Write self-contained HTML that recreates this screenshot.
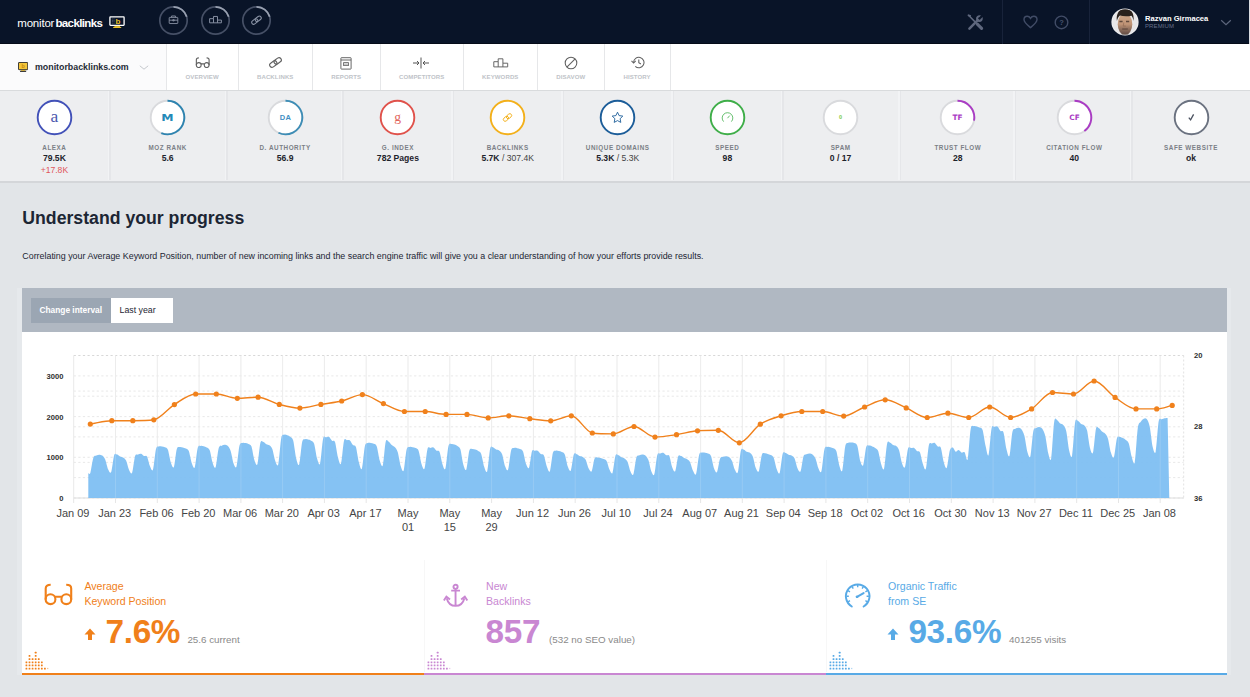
<!DOCTYPE html>
<html lang="en"><head><meta charset="utf-8"><title>Monitor Backlinks</title>
<style>
*{box-sizing:border-box;margin:0;padding:0}
html,body{width:1250px;height:697px;overflow:hidden}
body{font-family:"Liberation Sans",Arial,Helvetica,sans-serif;background:#e2e5e8;position:relative;color:#1f2937}
.abs{position:absolute}
#top{position:absolute;left:0;top:0;width:1250px;height:43.6px;background:#091428;border-bottom:1px solid #050b18}
#nav{position:absolute;left:0;top:43.6px;width:1250px;height:47.6px;background:#fff;border-bottom:1.4px solid #d9dbdd;z-index:2}
#nav .dom{position:absolute;left:0;top:0;width:166px;height:46.2px;background:#fbfbfc}
.vd{position:absolute;top:0;width:1px;height:46.2px;background:#e6e7e9}
.ni{position:absolute;top:0.9px;height:45px;text-align:center}
.ni svg{position:absolute;left:50%;}
.ni span{position:absolute;left:-5px;right:-5px;top:29.1px;font-size:6.05px;font-weight:bold;color:#c0c3c8;letter-spacing:.1px;text-transform:uppercase}
#met{position:absolute;left:0;top:90px;width:1250px;height:93.2px;background:#edeef0;border-bottom:2.800px solid #d4d6d9}
.md{position:absolute;top:0;width:3px;height:90.3px;margin-left:-2.5px;background:linear-gradient(90deg,#f2f3f5 0,#f2f3f5 1.5px,#e5e6e9 1.5px,#e5e6e9 3px)}
.mc{position:absolute;top:0;height:89px;text-align:center}
.mc .ring{position:absolute;left:50%;top:9.1px;margin-left:-18.5px;width:37px;height:37px}
.mc .lb{position:absolute;left:-10px;right:-10px;top:53.5px;font-size:6.3px;font-weight:bold;color:#7b7f86;letter-spacing:.55px;white-space:nowrap}
.mc .vl{position:absolute;left:-10px;right:-10px;top:62.6px;font-size:8.6px;font-weight:bold;color:#1d232c;white-space:nowrap}
.mc .vl i{font-style:normal;font-weight:normal;color:#444}
.mc .sub{position:absolute;left:-10px;right:-10px;top:75px;font-size:8.6px;color:#e0565b;white-space:nowrap}
h1{position:absolute;left:22.3px;top:207.6px;font-size:17.68px;line-height:20px;font-weight:bold;color:#1c2634;white-space:nowrap}
p.desc{position:absolute;left:22.3px;top:251px;font-size:8.88px;line-height:11px;color:#1c2634;white-space:nowrap}
#ph{position:absolute;left:22.2px;top:288.4px;width:1204.7px;height:43.3px;background:#b0b8c2}
#pb{position:absolute;left:22.2px;top:331.6px;width:1204.7px;height:343.4px;background:#fff}
.btn1{position:absolute;left:31px;top:297.5px;width:79.5px;height:25px;background:#9ba6b3;color:#fff;font-size:8.35px;font-weight:bold;line-height:25px;text-align:center;white-space:nowrap}
.btn2{position:absolute;left:110.5px;top:297.5px;width:62px;height:25px;background:#fff;color:#1c2634;font-size:8.8px;line-height:25px;padding-left:9px;white-space:nowrap}
svg.chart{position:absolute;left:0;top:0}
svg.chart .yl{font-family:"Liberation Sans",sans-serif;font-size:7.6px;font-weight:bold;fill:#2e2e2e}
svg.chart .xl{font-family:"Liberation Sans",sans-serif;font-size:11px;fill:#454545}
.st{position:absolute;top:560px;height:115px;border-bottom:2.5px solid #000}
.st .ttl{position:absolute;left:62px;top:19.4px;font-size:10.6px;line-height:14.3px;white-space:nowrap}
.st .big{position:absolute;top:54px;font-size:33.3px;line-height:36px;font-weight:bold;white-space:nowrap;letter-spacing:-.3px}
.st .sm{position:absolute;top:74.3px;font-size:9.8px;line-height:12px;color:#8a8a8a;white-space:nowrap}
.st svg{position:absolute}
.usr{position:absolute;left:1145px;top:13.8px;color:#fff;font-size:7.6px;font-weight:bold;white-space:nowrap;line-height:9px}
.prem{position:absolute;left:1145px;top:23.1px;color:#66708a;font-size:6px;white-space:nowrap;line-height:7px;letter-spacing:.1px}
.logo{position:absolute;left:17.3px;top:16.3px;color:#fff;font-size:11.5px;line-height:14px;white-space:nowrap;letter-spacing:-.2px}
.logo b{letter-spacing:-.62px;margin-left:1.2px}
.domt{position:absolute;left:35px;top:18.6px;font-size:8.84px;font-weight:bold;color:#252b36;line-height:11px;white-space:nowrap}
</style></head>
<body>
<div id="top"><div class="logo"><span>monitor</span><b>backlinks</b></div><svg class="abs" style="left:108.500px;top:15.500px" width="16" height="12.500" viewBox="0 0 16 12.500">
<rect x="0.900" y="0.900" width="14.200" height="8.400" rx="0.500" fill="none" stroke="#fff" stroke-width="1.300"/>
<rect x="5.400" y="9.900" width="5.600" height="1" fill="#e9c12c"/><rect x="4.200" y="10.900" width="8" height="1.100" fill="#e9c12c"/>
<path d="M3.400 2.600v5M5 2.600v5" stroke="#7f8899" stroke-width="0.700" stroke-dasharray="0.700,0.700"/>
<text x="9" y="8.300" text-anchor="middle" font-family="Liberation Sans,sans-serif" font-weight="bold" font-size="8" fill="#e9c12c">b</text>
</svg><svg class="abs" style="left:158.2px;top:5.200px" width="31" height="31" viewBox="0 0 31 31"><circle cx="15.5" cy="15.5" r="13.700" fill="none" stroke="#465066" stroke-width="1.700"/><path d="M15.5 1.800A13.700 13.700 0 0 1 28.700 11.800" fill="none" stroke="#99a1b1" stroke-width="1.700"/><g fill="none" stroke="#8b94a6" stroke-width="1" transform="translate(15.500 15.200) scale(0.880) translate(-15.500 -15.800)"><rect x="10.6" y="12.6" width="9.8" height="7" rx="0.6"/><path d="M13.3 12.6v-1.6h4.4v1.6M10.6 15.8h9.8M14.7 15.2h1.6v1.4h-1.6z"/></g></svg><svg class="abs" style="left:199.8px;top:5.200px" width="31" height="31" viewBox="0 0 31 31"><circle cx="15.5" cy="15.5" r="13.700" fill="none" stroke="#465066" stroke-width="1.700"/><path d="M15.5 1.800A13.700 13.700 0 0 1 28.700 11.800" fill="none" stroke="#99a1b1" stroke-width="1.700"/><g fill="none" stroke="#8b94a6" stroke-width="1" transform="translate(15.500 14.600) scale(0.950) translate(-15.500 -15)"><path d="M9.3 18.4v-4.4h4.1v-2.3h4.2v3.8h4.1v2.9zM13.4 14v4.4M17.6 15.5v2.9"/></g></svg><svg class="abs" style="left:241.4px;top:5.200px" width="31" height="31" viewBox="0 0 31 31"><circle cx="15.5" cy="15.5" r="13.700" fill="none" stroke="#465066" stroke-width="1.700"/><path d="M15.5 1.800A13.700 13.700 0 0 1 28.700 11.800" fill="none" stroke="#99a1b1" stroke-width="1.700"/><g fill="none" stroke="#8b94a6" stroke-width="1.050" transform="translate(0 -0.300) rotate(-38 15.5 15.5)"><rect x="10" y="13.600" width="6.600" height="3.800" rx="1.900"/><rect x="14.400" y="13.600" width="6.600" height="3.800" rx="1.900"/></g></svg><svg class="abs" style="left:967.300px;top:14.200px" width="17" height="17" viewBox="0 0 17 17">
<g stroke="#5f687e" fill="none" stroke-linecap="round">
<path d="M2.400 14.600L10.800 6.200" stroke-width="2.500"/>
<circle cx="12.400" cy="4.600" r="2.300" stroke-width="2.100"/>
<path d="M12.800 4.200L16 1" stroke="#091428" stroke-width="2.300" stroke-linecap="butt"/>
<path d="M2 1.800l6.800 6.800" stroke-width="1.500"/>
<path d="M1.500 1.300l1.700 0.600" stroke-width="1.800"/>
<path d="M10.300 10.100l4.300 4.300" stroke-width="3.100"/>
</g></svg><div class="abs" style="left:1002px;top:0;width:1px;height:44px;background:#18233a"></div><div class="abs" style="left:1089px;top:0;width:1px;height:44px;background:#18233a"></div><svg class="abs" style="left:1022.5px;top:15px" width="15" height="14" viewBox="0 0 15 14">
<path d="M7.5 12.6C4.2 9.9 1 7.6 1 4.6 1 2.7 2.4 1.3 4.2 1.3c1.4 0 2.6.8 3.3 2 .7-1.2 1.9-2 3.3-2C12.600 1.3 14 2.700 14 4.600c0 3-3.200 5.300-6.500 8z" fill="none" stroke="#414c66" stroke-width="1.400"/></svg><svg class="abs" style="left:1053.5px;top:14.5px" width="15" height="15" viewBox="0 0 15 15">
<circle cx="7.5" cy="7.400" r="6.300" fill="none" stroke="#414c66" stroke-width="1.400"/>
<text x="7.500" y="10" text-anchor="middle" font-family="Liberation Sans,sans-serif" font-size="7.500" font-weight="bold" fill="#48536d">?</text></svg><svg class="abs" style="left:1110.800px;top:8.100px" width="28" height="28" viewBox="0 0 28 28">
<defs><clipPath id="av"><circle cx="14" cy="14" r="12.800"/></clipPath>
<filter id="avb" x="-20%" y="-20%" width="140%" height="140%"><feGaussianBlur stdDeviation="0.750"/></filter>
<linearGradient id="fg" x1="0" y1="0" x2="0" y2="1"><stop offset="0" stop-color="#cfa98a"/><stop offset="0.500" stop-color="#c09476"/><stop offset="0.720" stop-color="#8f6f5e"/><stop offset="1" stop-color="#5b4840"/></linearGradient></defs>
<circle cx="14" cy="14" r="13.600" fill="#f1f1f3"/>
<g clip-path="url(#av)"><g filter="url(#avb)">
<rect x="-2" y="-2" width="32" height="32" fill="#e7e6e8"/>
<ellipse cx="14" cy="29" rx="9" ry="3.500" fill="#2c2624"/>
<ellipse cx="14" cy="16.200" rx="7.300" ry="11" fill="url(#fg)"/>
<path d="M5.900 13C4.800 6 8.400 0.600 14.200 0.600c6 0 9.400 5.200 8.300 12.400-.4-2.600-1.100-4.300-2-5.300-3.600.9-8.400.8-11.600-.2-1.400 1.200-2.400 2.900-3 5.500z" fill="#2b221c"/>
<path d="M8.400 13.500h3.200M15 13.500h3.200" stroke="#3f2f27" stroke-width="1.300" opacity="0.750"/>
<path d="M12.800 14.500l-.6 3.600h2.600" stroke="#8d6650" stroke-width="0.900" fill="none" opacity="0.700"/>
<path d="M11.200 21h5.600" stroke="#4a352e" stroke-width="1.100" opacity="0.700"/>
</g></g></svg><div class="usr">Razvan Girmacea</div><div class="prem">PREMIUM</div><svg class="abs" style="left:1220px;top:18.500px" width="12" height="7" viewBox="0 0 12 7"><path d="M1.200 1.200l4.800 4.400 4.800-4.400" fill="none" stroke="#5d667c" stroke-width="1.200"/></svg></div>
<div id="nav"><div class="dom"></div><svg class="abs" style="left:17.800px;top:18.400px" width="10.200" height="10.200" viewBox="0 0 11 11">
<rect x="0.500" y="0.500" width="10" height="7.800" rx="0.600" fill="#f5c63a" stroke="#2a2a2a" stroke-width="1"/>
<rect x="3.200" y="8.600" width="4.600" height="1" fill="#f5c63a"/><rect x="2.200" y="9.500" width="6.600" height="1.200" fill="#2a2a2a"/>
<text x="5.500" y="6.800" text-anchor="middle" font-family="Liberation Sans,sans-serif" font-weight="bold" font-size="6" fill="#c48a10">b</text></svg><div class="domt">monitorbacklinks.com</div><svg class="abs" style="left:139px;top:21.300px" width="10" height="6" viewBox="0 0 10 6"><path d="M0.800 0.800l4.200 3.400 4.200-3.400" fill="none" stroke="#c4c7cc" stroke-width="1"/></svg><div class="vd" style="left:166.0px"></div><div class="vd" style="left:238.2px"></div><div class="vd" style="left:312.3px"></div><div class="vd" style="left:380.0px"></div><div class="vd" style="left:463.3px"></div><div class="vd" style="left:537.3px"></div><div class="vd" style="left:604.3px"></div><div class="vd" style="left:669.9px"></div><div class="ni" style="left:166.0px;width:72.2px"><svg width="15.500" height="11.500" viewBox="0 0 31 23" style="margin-left:-7.500px;top:12.300px"><g fill="none" stroke="#606060" stroke-width="2.200"><circle cx="7.500" cy="16.200" r="4.900"/><circle cx="23.300" cy="16.200" r="4.900"/><path d="M11.800 13.700h7.200M2.700 16.400V5.600C2.700 3 4.200 1.700 7.700 1.700M28.200 16.400V5.600c0-2.600-1.500-3.900-5-3.900"/></g></svg><span>Overview</span></div><div class="ni" style="left:238.2px;width:74.1px"><svg width="15" height="13" viewBox="0 0 15 13" style="margin-left:-7.400px;top:12px"><g fill="none" stroke="#606060" stroke-width="1.150" transform="rotate(-36 7.500 6.500)"><rect x="0.900" y="4.200" width="7.800" height="4.600" rx="2.300"/><rect x="6.300" y="4.200" width="7.800" height="4.600" rx="2.300"/></g></svg><span>Backlinks</span></div><div class="ni" style="left:312.3px;width:67.7px"><svg width="12" height="13" viewBox="0 0 12 13" style="margin-left:-6.100px;top:12.400px"><g fill="none" stroke="#606060" stroke-width="0.950"><rect x="0.900" y="0.700" width="10.200" height="11.400" rx="0.500"/><path d="M0.900 3h10.200"/><rect x="3.600" y="5.600" width="4.800" height="3" stroke-width="0.800"/><path d="M3.600 7.100h4.800" stroke-width="0.600"/></g></svg><span>Reports</span></div><div class="ni" style="left:380.0px;width:83.3px"><svg width="18" height="12" viewBox="0 0 18 12" style="margin-left:-9.300px;top:12.300px"><g fill="none" stroke="#555" stroke-width="1"><path d="M9 0.500v11M1 6h6M5 4l2 2-2 2M17 6h-6M13 4l-2 2 2 2"/></g></svg><span>Competitors</span></div><div class="ni" style="left:463.3px;width:74.0px"><svg width="16" height="10" viewBox="0 0 16 10" style="margin-left:-7.800px;top:13.800px"><g fill="none" stroke="#606060" stroke-width="0.950"><path d="M0.800 8.900V3.700h4.400V0.800h4.700v4.400h4.800v3.700zM5.200 3.700v5.200M9.900 5.200v3.700"/></g></svg><span>Keywords</span></div><div class="ni" style="left:537.3px;width:67.0px"><svg width="14" height="14" viewBox="0 0 14 14" style="margin-left:-6.700px;top:11.700px"><g fill="none" stroke="#606060" stroke-width="1.050"><circle cx="7" cy="7" r="5.800"/><path d="M2.900 11.100L11.100 2.900"/></g></svg><span>Disavow</span></div><div class="ni" style="left:604.3px;width:65.6px"><svg width="14" height="13" viewBox="0 0 14 13" style="margin-left:-6.600px;top:11.800px"><g fill="none" stroke="#606060" stroke-width="1.050"><path d="M2.600 6.500a5.200 5.200 0 1 1 1.700 3.900"/><path d="M7.800 3.600v3.100l2.100 1.300"/><path d="M0.500 4.900l2.100 2.100 2.100-2.100" /></g></svg><span>History</span></div></div>
<div id="met"><div class="md" style="left:110px"></div><div class="md" style="left:227px"></div><div class="md" style="left:343px"></div><div class="md" style="left:453px"></div><div class="md" style="left:563px"></div><div class="md" style="left:673px"></div><div class="md" style="left:783px"></div><div class="md" style="left:900px"></div><div class="md" style="left:1015px"></div><div class="md" style="left:1132px"></div><div class="mc" style="left:4.4px;width:100px"><svg class="ring" viewBox="0 0 37 37"><circle cx="18.500" cy="18.500" r="16.80" fill="#fff" stroke="#4251b8" stroke-width="1.900"/><text x="18.500" y="22.5" text-anchor="middle" font-family="Liberation Serif,serif" font-weight="normal" font-size="17.5" fill="#4c59ae" >a</text></svg><div class="lb">ALEXA</div><div class="vl">79.5K</div><div class="sub">+17.8K</div></div><div class="mc" style="left:117.7px;width:100px"><svg class="ring" viewBox="0 0 37 37"><circle cx="18.500" cy="18.500" r="16.80" fill="#fff" stroke="#d9dadd" stroke-width="1.900"/><path d="M18.500 1.70A16.80 16.80 0 1 1 12.32 34.12" fill="none" stroke="#2e84b0" stroke-width="1.900"/><text x="18.500" y="0" text-anchor="middle" font-family="DejaVu Sans,sans-serif" font-weight="bold" font-size="10" fill="#2389b8" transform="translate(18.5 21.6) scale(1.24 0.82) translate(-18.5 0)">M</text></svg><div class="lb">MOZ RANK</div><div class="vl">5.6</div></div><div class="mc" style="left:235.1px;width:100px"><svg class="ring" viewBox="0 0 37 37"><circle cx="18.500" cy="18.500" r="16.80" fill="#fff" stroke="#d9dadd" stroke-width="1.900"/><path d="M18.500 1.70A16.80 16.80 0 1 1 11.44 33.75" fill="none" stroke="#3d8db6" stroke-width="1.900"/><text x="18.500" y="21.2" text-anchor="middle" font-family="Liberation Sans,sans-serif" font-weight="bold" font-size="7.5" fill="#3f8fc4" letter-spacing="0.3">DA</text></svg><div class="lb">D. AUTHORITY</div><div class="vl">56.9</div></div><div class="mc" style="left:347.9px;width:100px"><svg class="ring" viewBox="0 0 37 37"><circle cx="18.500" cy="18.500" r="16.80" fill="#fff" stroke="#e0524b" stroke-width="1.900"/><text x="18.500" y="21.5" text-anchor="middle" font-family="Liberation Serif,serif" font-weight="normal" font-size="13.5" fill="#e2635b" >g</text></svg><div class="lb">G. INDEX</div><div class="vl">782 Pages</div></div><div class="mc" style="left:457.7px;width:100px"><svg class="ring" viewBox="0 0 37 37"><circle cx="18.500" cy="18.500" r="16.80" fill="#fff" stroke="#f3b01b" stroke-width="1.900"/><g fill="none" stroke="#f3b01b" stroke-width="0.900" transform="rotate(-40 18.500 18.500)"><rect x="13.600" y="16.700" width="5.800" height="3.600" rx="1.800"/><rect x="17.600" y="16.700" width="5.800" height="3.600" rx="1.800"/></g></svg><div class="lb">BACKLINKS</div><div class="vl">5.7K<i> / 307.4K</i></div></div><div class="mc" style="left:567.7px;width:100px"><svg class="ring" viewBox="0 0 37 37"><circle cx="18.500" cy="18.500" r="16.80" fill="#fff" stroke="#1c5d99" stroke-width="1.900"/><path d="M18.500 13.200l1.600 3.400 3.700.5-2.700 2.600.7 3.700-3.300-1.800-3.300 1.800.7-3.700-2.700-2.600 3.700-.5z" fill="none" stroke="#1c5d99" stroke-width="0.900" stroke-linejoin="round"/></svg><div class="lb">UNIQUE DOMAINS</div><div class="vl">5.3K<i> / 5.3K</i></div></div><div class="mc" style="left:677.4px;width:100px"><svg class="ring" viewBox="0 0 37 37"><circle cx="18.500" cy="18.500" r="16.80" fill="#fff" stroke="#3fae49" stroke-width="1.900"/><g fill="none" stroke="#3fae49" stroke-width="0.800"><path d="M14.600 22.600a5.300 5.300 0 1 1 7.800 0"/><path d="M18.500 19.200l2.200-2.600"/></g></svg><div class="lb">SPEED</div><div class="vl">98</div></div><div class="mc" style="left:790.6px;width:100px"><svg class="ring" viewBox="0 0 37 37"><circle cx="18.500" cy="18.500" r="16.80" fill="#fff" stroke="#d9dadd" stroke-width="1.900"/><text x="18.500" y="20.4" text-anchor="middle" font-family="Liberation Sans,sans-serif" font-weight="bold" font-size="5.5" fill="#7ac943" >0</text></svg><div class="lb">SPAM</div><div class="vl">0 / 17</div></div><div class="mc" style="left:907.8px;width:100px"><svg class="ring" viewBox="0 0 37 37"><circle cx="18.500" cy="18.500" r="16.80" fill="#fff" stroke="#d9dadd" stroke-width="1.900"/><path d="M18.500 1.70A16.80 16.80 0 0 1 35.00 21.65" fill="none" stroke="#aa3cc4" stroke-width="1.900"/><text x="18.500" y="21.3" text-anchor="middle" font-family="DejaVu Sans,sans-serif" font-weight="bold" font-size="7.4" fill="#aa3cc4" >TF</text></svg><div class="lb">TRUST FLOW</div><div class="vl">28</div></div><div class="mc" style="left:1024.3px;width:100px"><svg class="ring" viewBox="0 0 37 37"><circle cx="18.500" cy="18.500" r="16.80" fill="#fff" stroke="#d9dadd" stroke-width="1.900"/><path d="M18.500 1.70A16.80 16.80 0 0 1 28.37 32.09" fill="none" stroke="#aa3cc4" stroke-width="1.900"/><text x="18.500" y="21.3" text-anchor="middle" font-family="DejaVu Sans,sans-serif" font-weight="bold" font-size="7.4" fill="#aa3cc4" >CF</text></svg><div class="lb">CITATION FLOW</div><div class="vl">40</div></div><div class="mc" style="left:1141.0px;width:100px"><svg class="ring" viewBox="0 0 37 37"><circle cx="18.500" cy="18.500" r="16.80" fill="#fff" stroke="#6b7280" stroke-width="1.900"/><path d="M15.800 18.600l1.800 2.200 3-5.400" fill="none" stroke="#4b5260" stroke-width="1.300"/></svg><div class="lb">SAFE WEBSITE</div><div class="vl">ok</div></div></div>
<h1>Understand your progress</h1>
<p class="desc">Correlating your Average Keyword Position, number of new incoming links and the search engine traffic will give you a clear understanding of how your efforts provide results.</p>
<div class="abs" style="left:17px;top:288.4px;width:1214px;height:386.6px;background:#e6e9ec"></div><div class="abs" style="left:1248.6px;top:0;width:1.4px;height:44px;background:#d9dbe0;z-index:3"></div><div id="ph"></div><div id="pb"></div><div class="btn1">Change interval</div><div class="btn2">Last year</div>
<svg class="chart" width="1250" height="697" viewBox="0 0 1250 697">
<line x1="73.7" x2="1183.7" y1="355.5" y2="355.5" stroke="#d4d4d4" stroke-width="0.9" stroke-dasharray="2.2,2.4"/>
<line x1="73.7" x2="1183.7" y1="375.9" y2="375.9" stroke="#e5e5e5" stroke-width="0.9" stroke-dasharray="2.2,2.4"/>
<line x1="73.7" x2="1183.7" y1="391.1" y2="391.1" stroke="#e5e5e5" stroke-width="0.9" stroke-dasharray="2.2,2.4"/>
<line x1="73.7" x2="1183.7" y1="396.2" y2="396.2" stroke="#e5e5e5" stroke-width="0.9" stroke-dasharray="2.2,2.4"/>
<line x1="73.7" x2="1183.7" y1="416.6" y2="416.6" stroke="#e5e5e5" stroke-width="0.9" stroke-dasharray="2.2,2.4"/>
<line x1="73.7" x2="1183.7" y1="426.8" y2="426.8" stroke="#e5e5e5" stroke-width="0.9" stroke-dasharray="2.2,2.4"/>
<line x1="73.7" x2="1183.7" y1="436.9" y2="436.9" stroke="#e5e5e5" stroke-width="0.9" stroke-dasharray="2.2,2.4"/>
<line x1="73.7" x2="1183.7" y1="457.3" y2="457.3" stroke="#e5e5e5" stroke-width="0.9" stroke-dasharray="2.2,2.4"/>
<line x1="73.7" x2="1183.7" y1="462.4" y2="462.4" stroke="#e5e5e5" stroke-width="0.9" stroke-dasharray="2.2,2.4"/>
<line x1="73.7" x2="1183.7" y1="477.6" y2="477.6" stroke="#e5e5e5" stroke-width="0.9" stroke-dasharray="2.2,2.4"/>
<line x1="73.7" x2="1183.7" y1="498.0" y2="498.0" stroke="#e5e5e5" stroke-width="0.9" stroke-dasharray="2.2,2.4"/>
<line x1="73.7" x2="73.7" y1="355.5" y2="498.0" stroke="#e9e9e9" stroke-width="1"/>
<line x1="115.5" x2="115.5" y1="355.5" y2="498.0" stroke="#e9e9e9" stroke-width="1"/>
<line x1="157.3" x2="157.3" y1="355.5" y2="498.0" stroke="#e9e9e9" stroke-width="1"/>
<line x1="199.1" x2="199.1" y1="355.5" y2="498.0" stroke="#e9e9e9" stroke-width="1"/>
<line x1="240.9" x2="240.9" y1="355.5" y2="498.0" stroke="#e9e9e9" stroke-width="1"/>
<line x1="282.6" x2="282.6" y1="355.5" y2="498.0" stroke="#e9e9e9" stroke-width="1"/>
<line x1="324.4" x2="324.4" y1="355.5" y2="498.0" stroke="#e9e9e9" stroke-width="1"/>
<line x1="366.2" x2="366.2" y1="355.5" y2="498.0" stroke="#e9e9e9" stroke-width="1"/>
<line x1="408.0" x2="408.0" y1="355.5" y2="498.0" stroke="#e9e9e9" stroke-width="1"/>
<line x1="449.8" x2="449.8" y1="355.5" y2="498.0" stroke="#e9e9e9" stroke-width="1"/>
<line x1="491.6" x2="491.6" y1="355.5" y2="498.0" stroke="#e9e9e9" stroke-width="1"/>
<line x1="533.4" x2="533.4" y1="355.5" y2="498.0" stroke="#e9e9e9" stroke-width="1"/>
<line x1="575.2" x2="575.2" y1="355.5" y2="498.0" stroke="#e9e9e9" stroke-width="1"/>
<line x1="617.0" x2="617.0" y1="355.5" y2="498.0" stroke="#e9e9e9" stroke-width="1"/>
<line x1="658.8" x2="658.8" y1="355.5" y2="498.0" stroke="#e9e9e9" stroke-width="1"/>
<line x1="700.6" x2="700.6" y1="355.5" y2="498.0" stroke="#e9e9e9" stroke-width="1"/>
<line x1="742.3" x2="742.3" y1="355.5" y2="498.0" stroke="#e9e9e9" stroke-width="1"/>
<line x1="784.1" x2="784.1" y1="355.5" y2="498.0" stroke="#e9e9e9" stroke-width="1"/>
<line x1="825.9" x2="825.9" y1="355.5" y2="498.0" stroke="#e9e9e9" stroke-width="1"/>
<line x1="867.7" x2="867.7" y1="355.5" y2="498.0" stroke="#e9e9e9" stroke-width="1"/>
<line x1="909.5" x2="909.5" y1="355.5" y2="498.0" stroke="#e9e9e9" stroke-width="1"/>
<line x1="951.3" x2="951.3" y1="355.5" y2="498.0" stroke="#e9e9e9" stroke-width="1"/>
<line x1="993.1" x2="993.1" y1="355.5" y2="498.0" stroke="#e9e9e9" stroke-width="1"/>
<line x1="1034.9" x2="1034.9" y1="355.5" y2="498.0" stroke="#e9e9e9" stroke-width="1"/>
<line x1="1076.7" x2="1076.7" y1="355.5" y2="498.0" stroke="#e9e9e9" stroke-width="1"/>
<line x1="1118.5" x2="1118.5" y1="355.5" y2="498.0" stroke="#e9e9e9" stroke-width="1"/>
<line x1="1160.2" x2="1160.2" y1="355.5" y2="498.0" stroke="#e9e9e9" stroke-width="1"/>
<line x1="1183.7" x2="1183.7" y1="355.5" y2="498.0" stroke="#e2e2e2" stroke-width="1" stroke-dasharray="2,2"/>
<line x1="73.7" x2="1183.7" y1="498.0" y2="498.0" stroke="#dddddd" stroke-width="1"/>
<line x1="73.7" x2="73.7" y1="498.0" y2="503.0" stroke="#e6e6e6" stroke-width="1"/>
<line x1="115.5" x2="115.5" y1="498.0" y2="503.0" stroke="#e6e6e6" stroke-width="1"/>
<line x1="157.3" x2="157.3" y1="498.0" y2="503.0" stroke="#e6e6e6" stroke-width="1"/>
<line x1="199.1" x2="199.1" y1="498.0" y2="503.0" stroke="#e6e6e6" stroke-width="1"/>
<line x1="240.9" x2="240.9" y1="498.0" y2="503.0" stroke="#e6e6e6" stroke-width="1"/>
<line x1="282.6" x2="282.6" y1="498.0" y2="503.0" stroke="#e6e6e6" stroke-width="1"/>
<line x1="324.4" x2="324.4" y1="498.0" y2="503.0" stroke="#e6e6e6" stroke-width="1"/>
<line x1="366.2" x2="366.2" y1="498.0" y2="503.0" stroke="#e6e6e6" stroke-width="1"/>
<line x1="408.0" x2="408.0" y1="498.0" y2="503.0" stroke="#e6e6e6" stroke-width="1"/>
<line x1="449.8" x2="449.8" y1="498.0" y2="503.0" stroke="#e6e6e6" stroke-width="1"/>
<line x1="491.6" x2="491.6" y1="498.0" y2="503.0" stroke="#e6e6e6" stroke-width="1"/>
<line x1="533.4" x2="533.4" y1="498.0" y2="503.0" stroke="#e6e6e6" stroke-width="1"/>
<line x1="575.2" x2="575.2" y1="498.0" y2="503.0" stroke="#e6e6e6" stroke-width="1"/>
<line x1="617.0" x2="617.0" y1="498.0" y2="503.0" stroke="#e6e6e6" stroke-width="1"/>
<line x1="658.8" x2="658.8" y1="498.0" y2="503.0" stroke="#e6e6e6" stroke-width="1"/>
<line x1="700.6" x2="700.6" y1="498.0" y2="503.0" stroke="#e6e6e6" stroke-width="1"/>
<line x1="742.3" x2="742.3" y1="498.0" y2="503.0" stroke="#e6e6e6" stroke-width="1"/>
<line x1="784.1" x2="784.1" y1="498.0" y2="503.0" stroke="#e6e6e6" stroke-width="1"/>
<line x1="825.9" x2="825.9" y1="498.0" y2="503.0" stroke="#e6e6e6" stroke-width="1"/>
<line x1="867.7" x2="867.7" y1="498.0" y2="503.0" stroke="#e6e6e6" stroke-width="1"/>
<line x1="909.5" x2="909.5" y1="498.0" y2="503.0" stroke="#e6e6e6" stroke-width="1"/>
<line x1="951.3" x2="951.3" y1="498.0" y2="503.0" stroke="#e6e6e6" stroke-width="1"/>
<line x1="993.1" x2="993.1" y1="498.0" y2="503.0" stroke="#e6e6e6" stroke-width="1"/>
<line x1="1034.9" x2="1034.9" y1="498.0" y2="503.0" stroke="#e6e6e6" stroke-width="1"/>
<line x1="1076.7" x2="1076.7" y1="498.0" y2="503.0" stroke="#e6e6e6" stroke-width="1"/>
<line x1="1118.5" x2="1118.5" y1="498.0" y2="503.0" stroke="#e6e6e6" stroke-width="1"/>
<line x1="1160.2" x2="1160.2" y1="498.0" y2="503.0" stroke="#e6e6e6" stroke-width="1"/>
<path d="M88.3,473.1C88.6,473.1 89.6,475.4 90.3,473.1C91.0,470.8 92.4,460.5 93.3,457.9C94.2,455.3 95.4,456.1 96.3,455.6C97.2,455.1 98.4,454.7 99.3,454.7C100.1,454.7 101.3,454.8 102.2,455.5C103.1,456.2 104.3,457.3 105.2,459.4C106.1,461.5 107.3,467.6 108.2,469.5C109.1,471.4 110.3,474.2 111.2,472.0C112.1,469.8 113.3,457.6 114.2,455.0C115.1,452.4 116.3,454.4 117.2,454.6C118.1,454.8 119.2,456.1 120.1,456.5C121.0,456.9 122.2,456.9 123.1,457.5C124.0,458.1 125.2,458.7 126.1,460.6C127.0,462.5 128.2,468.2 129.1,470.0C130.0,471.9 131.2,474.9 132.1,472.8C133.0,470.7 134.2,458.7 135.1,456.0C136.0,453.3 137.2,455.0 138.0,454.6C138.9,454.3 140.1,453.6 141.0,453.8C141.9,454.0 143.1,455.6 144.0,456.0C144.9,456.4 146.1,454.9 147.0,456.4C147.9,458.0 149.1,464.2 150.0,466.2C150.9,468.2 152.1,472.2 153.0,469.6C153.9,467.0 155.1,452.5 156.0,449.1C156.8,445.6 158.0,446.8 158.9,446.4C159.8,446.0 161.0,446.4 161.9,446.5C162.8,446.6 164.0,446.7 164.9,447.2C165.8,447.7 167.0,447.4 167.9,449.8C168.8,452.1 170.0,460.2 170.9,462.8C171.8,465.4 173.0,469.0 173.9,466.9C174.8,464.8 175.9,451.9 176.8,448.9C177.7,446.0 178.9,447.2 179.8,447.0C180.7,446.8 181.9,447.2 182.8,447.4C183.7,447.7 184.9,447.9 185.8,448.5C186.7,449.0 187.9,448.9 188.8,451.1C189.7,453.3 190.9,460.7 191.8,463.2C192.7,465.6 193.9,469.5 194.8,467.2C195.6,464.9 196.8,451.2 197.7,448.0C198.6,444.8 199.8,446.2 200.7,445.9C201.6,445.6 202.8,446.1 203.7,446.3C204.6,446.5 205.8,446.8 206.7,447.4C207.6,448.0 208.8,447.8 209.7,450.2C210.6,452.5 211.8,460.4 212.7,462.9C213.6,465.5 214.7,469.4 215.6,467.2C216.5,465.0 217.7,451.7 218.6,448.5C219.5,445.3 220.7,446.3 221.6,445.8C222.5,445.2 223.7,444.8 224.6,444.8C225.5,444.8 226.7,444.9 227.6,445.7C228.5,446.6 229.7,448.1 230.6,450.7C231.5,453.3 232.7,460.8 233.5,463.2C234.4,465.6 235.6,469.1 236.5,466.4C237.4,463.7 238.6,449.0 239.5,445.5C240.4,442.0 241.6,443.3 242.5,442.9C243.4,442.5 244.6,442.9 245.5,443.1C246.4,443.2 247.6,443.4 248.5,443.9C249.4,444.4 250.6,444.2 251.5,446.6C252.3,449.0 253.5,457.4 254.4,460.0C255.3,462.7 256.5,466.9 257.4,464.3C258.3,461.7 259.5,446.0 260.4,442.7C261.3,439.3 262.5,441.8 263.4,442.0C264.3,442.2 265.5,443.7 266.4,444.2C267.3,444.7 268.5,444.6 269.4,445.3C270.3,446.1 271.4,446.8 272.3,449.1C273.2,451.5 274.4,458.7 275.3,461.0C276.2,463.2 277.4,467.8 278.3,464.3C279.2,460.8 280.4,442.1 281.3,437.7C282.2,433.2 283.4,435.1 284.3,434.7C285.2,434.3 286.4,435.0 287.3,435.3C288.2,435.6 289.4,436.0 290.2,436.8C291.1,437.6 292.3,437.4 293.2,440.6C294.1,443.9 295.3,454.8 296.2,458.4C297.1,461.9 298.3,466.8 299.2,464.3C300.1,461.8 301.3,445.5 302.2,441.8C303.1,438.0 304.3,439.5 305.2,439.2C306.1,438.8 307.3,439.3 308.2,439.6C309.0,439.8 310.2,440.0 311.1,440.7C312.0,441.3 313.2,441.1 314.1,443.8C315.0,446.5 316.2,455.7 317.1,458.6C318.0,461.6 319.2,466.5 320.1,463.5C321.0,460.5 322.2,442.6 323.1,438.7C324.0,434.7 325.2,437.6 326.1,437.3C327.0,437.1 328.1,436.3 329.0,436.8C329.9,437.3 331.1,440.0 332.0,440.8C332.9,441.6 334.1,439.6 335.0,442.1C335.9,444.7 337.1,454.4 338.0,457.6C338.9,460.8 340.1,466.0 341.0,463.5C341.9,461.0 343.1,444.2 344.0,440.7C344.9,437.2 346.1,440.2 346.9,440.2C347.8,440.1 349.0,439.7 349.9,440.4C350.8,441.1 352.0,443.9 352.9,444.9C353.8,445.9 355.0,444.3 355.9,446.9C356.8,449.5 358.0,459.1 358.9,462.3C359.8,465.6 361.0,471.0 361.9,468.6C362.8,466.2 364.0,449.8 364.9,446.0C365.7,442.1 366.9,443.5 367.8,443.0C368.7,442.6 369.9,442.9 370.8,443.0C371.7,443.1 372.9,443.3 373.8,443.8C374.7,444.3 375.9,443.9 376.8,446.5C377.7,449.0 378.9,458.0 379.8,460.8C380.7,463.6 381.9,468.1 382.8,465.2C383.7,462.3 384.8,445.2 385.7,441.7C386.6,438.2 387.8,441.2 388.7,441.7C389.6,442.2 390.8,444.1 391.7,444.9C392.6,445.7 393.8,445.9 394.7,446.9C395.6,448.0 396.8,449.1 397.7,451.9C398.6,454.8 399.8,463.1 400.7,465.9C401.6,468.7 402.8,472.9 403.7,470.4C404.5,467.9 405.7,453.0 406.6,449.5C407.5,446.0 408.7,447.3 409.6,447.0C410.5,446.6 411.7,447.0 412.6,447.2C413.5,447.3 414.7,447.5 415.6,448.1C416.5,448.6 417.7,448.4 418.6,450.8C419.5,453.2 420.7,461.6 421.6,464.3C422.5,466.9 423.6,470.9 424.5,468.6C425.4,466.3 426.6,452.1 427.5,449.0C428.4,445.9 429.6,448.1 430.5,447.9C431.4,447.7 432.6,447.1 433.5,447.5C434.4,447.9 435.6,450.0 436.5,450.7C437.4,451.3 438.6,449.7 439.5,451.7C440.4,453.7 441.6,461.4 442.4,464.0C443.3,466.5 444.5,471.2 445.4,468.6C446.3,466.0 447.5,450.0 448.4,446.3C449.3,442.6 450.5,444.2 451.4,444.0C452.3,443.7 453.5,444.3 454.4,444.6C455.3,444.9 456.5,445.2 457.4,446.0C458.3,446.7 459.5,446.6 460.4,449.3C461.2,452.1 462.4,461.4 463.3,464.4C464.2,467.4 465.4,471.5 466.3,469.5C467.2,467.5 468.4,453.9 469.3,450.8C470.2,447.8 471.4,449.2 472.3,449.0C473.2,448.8 474.4,449.4 475.3,449.6C476.2,449.9 477.4,450.3 478.3,450.9C479.2,451.6 480.3,451.5 481.2,453.9C482.1,456.3 483.3,464.2 484.2,466.8C485.1,469.4 486.3,473.9 487.2,471.2C488.1,468.5 489.3,452.0 490.2,448.5C491.1,444.9 492.3,447.3 493.2,447.5C494.1,447.7 495.3,449.1 496.2,449.6C497.1,450.0 498.3,449.8 499.1,450.5C500.0,451.2 501.2,451.8 502.1,454.2C503.0,456.6 504.2,464.0 505.1,466.3C506.0,468.6 507.2,471.9 508.1,469.5C509.0,467.1 510.2,453.6 511.1,450.4C512.0,447.1 513.2,448.3 514.1,448.0C515.0,447.7 516.2,448.0 517.1,448.2C517.9,448.3 519.1,448.5 520.0,449.0C520.9,449.5 522.1,449.3 523.0,451.5C523.9,453.7 525.1,461.4 526.0,463.8C526.9,466.3 528.1,469.7 529.0,467.8C529.9,465.9 531.1,453.7 532.0,451.2C532.9,448.6 534.1,450.8 535.0,450.7C535.9,450.7 537.0,450.4 537.9,450.9C538.8,451.4 540.0,453.4 540.9,454.1C541.8,454.8 543.0,453.6 543.9,455.5C544.8,457.4 546.0,464.3 546.9,466.7C547.8,469.0 549.0,473.3 549.9,471.2C550.8,469.1 552.0,455.9 552.9,452.8C553.8,449.7 555.0,450.9 555.8,450.7C556.7,450.4 557.9,450.8 558.8,451.0C559.7,451.1 560.9,451.4 561.8,451.9C562.7,452.4 563.9,452.2 564.8,454.4C565.7,456.6 566.9,464.1 567.8,466.5C568.7,468.9 569.9,472.2 570.8,470.4C571.7,468.6 572.9,457.0 573.8,454.6C574.6,452.2 575.8,454.0 576.7,454.2C577.6,454.4 578.8,455.6 579.7,456.0C580.6,456.4 581.8,456.3 582.7,456.9C583.6,457.5 584.8,458.1 585.7,459.8C586.6,461.6 587.8,466.9 588.7,468.6C589.6,470.3 590.8,472.7 591.7,471.2C592.6,469.7 593.7,460.6 594.6,458.6C595.5,456.5 596.7,457.5 597.6,457.4C598.5,457.3 599.7,457.7 600.6,457.9C601.5,458.1 602.7,458.4 603.6,458.9C604.5,459.3 605.7,459.3 606.6,461.0C607.5,462.6 608.7,468.0 609.6,469.8C610.5,471.6 611.7,475.0 612.5,472.9C613.4,470.8 614.6,458.3 615.5,455.6C616.4,453.0 617.6,455.1 618.5,455.3C619.4,455.5 620.6,456.8 621.5,457.3C622.4,457.8 623.6,457.7 624.5,458.4C625.4,459.1 626.6,459.7 627.5,461.7C628.4,463.6 629.6,469.5 630.5,471.4C631.4,473.3 632.5,476.4 633.4,474.3C634.3,472.2 635.5,460.4 636.4,457.6C637.3,454.7 638.5,455.7 639.4,455.2C640.3,454.7 641.5,454.4 642.4,454.4C643.3,454.4 644.5,454.6 645.4,455.4C646.3,456.2 647.5,457.6 648.4,460.0C649.3,462.4 650.5,469.2 651.3,471.3C652.2,473.5 653.4,476.8 654.3,474.3C655.2,471.8 656.4,458.1 657.3,455.0C658.2,451.9 659.4,453.9 660.3,453.5C661.2,453.2 662.4,452.4 663.3,452.7C664.2,452.9 665.4,454.8 666.3,455.3C667.2,455.7 668.4,454.1 669.3,455.8C670.1,457.6 671.3,464.9 672.2,467.2C673.1,469.5 674.3,472.8 675.2,471.2C676.1,469.6 677.3,458.5 678.2,456.2C679.1,454.0 680.3,455.9 681.2,456.1C682.1,456.4 683.3,457.6 684.2,458.1C685.1,458.6 686.3,458.6 687.2,459.3C688.1,459.9 689.2,460.5 690.1,462.3C691.0,464.1 692.2,469.3 693.1,471.1C694.0,472.8 695.2,476.2 696.1,473.8C697.0,471.4 698.2,458.1 699.1,454.9C700.0,451.7 701.2,452.9 702.1,452.6C703.0,452.3 704.2,452.6 705.1,452.8C706.0,452.9 707.2,453.1 708.0,453.6C708.9,454.1 710.1,453.8 711.0,456.0C711.9,458.2 713.1,465.8 714.0,468.2C714.9,470.6 716.1,473.5 717.0,472.1C717.9,470.7 719.1,461.0 720.0,458.7C720.9,456.5 722.1,457.2 723.0,456.8C723.9,456.5 725.1,456.2 726.0,456.2C726.8,456.2 728.0,456.3 728.9,457.0C729.8,457.7 731.0,458.7 731.9,460.7C732.8,462.6 734.0,468.0 734.9,469.7C735.8,471.4 737.0,475.0 737.9,472.1C738.8,469.2 740.0,453.9 740.9,450.5C741.8,447.2 743.0,449.5 743.9,449.7C744.8,449.9 745.9,451.4 746.8,451.8C747.7,452.3 748.9,452.1 749.8,452.8C750.7,453.5 751.9,454.1 752.8,456.4C753.7,458.7 754.9,465.8 755.8,468.0C756.7,470.2 757.9,473.2 758.8,471.2C759.7,469.2 760.9,457.6 761.8,454.9C762.7,452.2 763.9,453.4 764.7,453.3C765.6,453.1 766.8,453.6 767.7,453.9C768.6,454.2 769.8,454.5 770.7,455.1C771.6,455.6 772.8,455.6 773.7,457.7C774.6,459.8 775.8,466.7 776.7,469.0C777.6,471.3 778.8,475.2 779.7,472.9C780.6,470.6 781.8,456.8 782.7,453.8C783.5,450.9 784.7,452.9 785.6,453.0C786.5,453.1 787.7,454.3 788.6,454.7C789.5,455.1 790.7,454.9 791.6,455.4C792.5,456.0 793.7,456.5 794.6,458.5C795.5,460.5 796.7,466.6 797.6,468.5C798.5,470.4 799.7,473.0 800.6,471.2C801.5,469.4 802.6,458.9 803.5,456.3C804.4,453.8 805.6,454.6 806.5,454.2C807.4,453.8 808.6,453.5 809.5,453.5C810.4,453.5 811.6,453.6 812.5,454.4C813.4,455.1 814.6,456.3 815.5,458.5C816.4,460.6 817.6,466.6 818.5,468.5C819.4,470.5 820.6,474.1 821.4,471.2C822.3,468.3 823.5,453.0 824.4,449.4C825.3,445.7 826.5,447.2 827.4,446.9C828.3,446.5 829.5,447.0 830.4,447.2C831.3,447.5 832.5,447.7 833.4,448.3C834.3,448.9 835.5,448.7 836.4,451.3C837.3,454.0 838.5,462.8 839.4,465.7C840.3,468.6 841.4,473.3 842.3,470.4C843.2,467.5 844.4,450.2 845.3,446.1C846.2,441.9 847.4,443.3 848.3,442.7C849.2,442.2 850.4,442.4 851.3,442.5C852.2,442.5 853.4,442.6 854.3,443.1C855.2,443.5 856.4,443.1 857.3,445.7C858.2,448.4 859.4,457.8 860.2,460.7C861.1,463.6 862.3,467.2 863.2,465.2C864.1,463.2 865.3,450.0 866.2,447.1C867.1,444.1 868.3,445.6 869.2,445.5C870.1,445.4 871.3,446.0 872.2,446.4C873.1,446.7 874.3,447.2 875.2,447.9C876.1,448.6 877.3,448.7 878.2,451.1C879.0,453.5 880.2,461.3 881.1,464.0C882.0,466.6 883.2,471.6 884.1,468.6C885.0,465.6 886.2,447.6 887.1,443.7C888.0,439.8 889.2,442.5 890.1,442.7C891.0,442.9 892.2,444.5 893.1,445.0C894.0,445.5 895.2,445.3 896.1,446.0C897.0,446.8 898.1,447.5 899.0,450.1C899.9,452.7 901.1,460.8 902.0,463.3C902.9,465.9 904.1,469.1 905.0,466.9C905.9,464.7 907.1,451.6 908.0,448.7C908.9,445.9 910.1,448.1 911.0,448.0C911.9,447.8 913.1,447.4 914.0,447.8C914.9,448.3 916.1,450.4 916.9,451.0C917.8,451.7 919.0,450.3 919.9,452.3C920.8,454.2 922.0,461.6 922.9,464.0C923.8,466.5 925.0,471.5 925.9,468.6C926.8,465.7 928.0,448.7 928.9,445.0C929.8,441.2 931.0,443.9 931.9,443.6C932.8,443.3 934.0,442.5 934.9,443.0C935.7,443.4 936.9,445.9 937.8,446.6C938.7,447.4 939.9,445.4 940.8,447.8C941.7,450.1 942.9,459.3 943.8,462.3C944.7,465.3 945.9,469.6 946.8,467.8C947.7,466.0 948.9,453.6 949.8,450.6C950.7,447.5 951.9,447.4 952.8,447.5C953.7,447.7 954.8,451.3 955.7,451.7C956.6,452.0 957.8,449.9 958.7,450.1C959.6,450.2 960.8,452.4 961.7,452.8C962.6,453.1 963.8,451.5 964.7,452.4C965.6,453.4 966.8,462.7 967.7,459.2C968.6,455.7 969.8,433.9 970.7,428.9C971.6,423.9 972.8,426.4 973.6,426.1C974.5,425.7 975.7,426.2 976.6,426.4C977.5,426.6 978.7,426.9 979.6,427.4C980.5,427.9 981.7,427.2 982.6,430.0C983.5,432.8 984.7,442.2 985.6,445.9C986.5,449.7 987.7,457.6 988.6,454.9C989.5,452.2 990.7,432.4 991.6,428.2C992.4,424.0 993.6,427.2 994.5,426.9C995.4,426.6 996.6,425.8 997.5,426.4C998.4,427.0 999.6,430.0 1000.5,430.9C1001.4,431.8 1002.6,429.7 1003.5,432.4C1004.4,435.2 1005.6,445.8 1006.5,449.2C1007.4,452.7 1008.6,458.3 1009.5,455.7C1010.4,453.1 1011.5,436.1 1012.4,432.1C1013.3,428.0 1014.5,429.4 1015.4,428.8C1016.3,428.1 1017.5,427.7 1018.4,427.7C1019.3,427.8 1020.5,428.0 1021.4,429.2C1022.3,430.4 1023.5,432.3 1024.4,435.8C1025.3,439.2 1026.5,448.8 1027.4,451.9C1028.3,455.0 1029.5,459.3 1030.4,456.2C1031.2,453.1 1032.4,435.5 1033.3,431.2C1034.2,427.0 1035.4,428.5 1036.3,427.9C1037.2,427.3 1038.4,426.9 1039.3,427.0C1040.2,427.1 1041.4,427.5 1042.3,428.8C1043.2,430.2 1044.4,432.3 1045.3,436.0C1046.2,439.7 1047.4,450.1 1048.3,453.5C1049.2,456.8 1050.3,463.1 1051.2,458.3C1052.1,453.5 1053.3,427.4 1054.2,421.7C1055.1,416.0 1056.3,419.9 1057.2,420.2C1058.1,420.4 1059.3,422.8 1060.2,423.5C1061.1,424.2 1062.3,423.8 1063.2,424.9C1064.1,426.0 1065.3,427.1 1066.2,430.9C1067.1,434.7 1068.3,446.5 1069.1,450.2C1070.0,453.9 1071.2,459.6 1072.1,455.4C1073.0,451.2 1074.2,427.6 1075.1,422.4C1076.0,417.2 1077.2,420.7 1078.1,421.0C1079.0,421.2 1080.2,423.3 1081.1,423.9C1082.0,424.5 1083.2,424.2 1084.1,425.2C1085.0,426.2 1086.2,427.1 1087.1,430.5C1087.9,433.9 1089.1,444.6 1090.0,447.9C1090.9,451.2 1092.1,455.4 1093.0,452.5C1093.9,449.6 1095.1,432.0 1096.0,428.4C1096.9,424.8 1098.1,427.8 1099.0,428.3C1099.9,428.8 1101.1,430.8 1102.0,431.5C1102.9,432.3 1104.1,432.4 1105.0,433.5C1105.9,434.5 1107.0,435.6 1107.9,438.4C1108.8,441.3 1110.0,449.8 1110.9,452.6C1111.8,455.4 1113.0,459.2 1113.9,457.1C1114.8,455.0 1116.0,441.5 1116.9,438.4C1117.8,435.4 1119.0,437.0 1119.9,437.0C1120.8,437.0 1122.0,437.7 1122.9,438.1C1123.8,438.6 1125.0,439.1 1125.8,439.9C1126.7,440.7 1127.9,440.8 1128.8,443.4C1129.7,446.0 1130.9,454.2 1131.8,457.0C1132.7,459.8 1133.9,466.4 1134.8,462.0C1135.7,457.6 1136.9,433.9 1137.8,427.9C1138.7,421.9 1139.9,423.1 1140.8,421.7C1141.7,420.3 1142.9,419.1 1143.8,418.7C1144.6,418.3 1145.8,417.9 1146.7,419.1C1147.6,420.3 1148.8,422.3 1149.7,426.5C1150.6,430.7 1151.8,443.4 1152.7,447.1C1153.6,450.8 1154.8,455.3 1155.7,451.4C1156.6,447.5 1157.8,426.1 1158.7,421.3C1159.6,416.5 1160.8,419.8 1161.7,419.3C1162.6,418.9 1163.7,418.5 1164.6,418.3C1165.5,418.1 1167.2,418.1 1167.6,418.0L1169.3,498.0L88.3,498.0Z" fill="#7cbdf2" fill-opacity="0.93"/>
<line x1="115.5" x2="115.5" y1="355.5" y2="498.0" stroke="#fff" stroke-opacity="0.16" stroke-width="1"/>
<line x1="157.3" x2="157.3" y1="355.5" y2="498.0" stroke="#fff" stroke-opacity="0.16" stroke-width="1"/>
<line x1="199.1" x2="199.1" y1="355.5" y2="498.0" stroke="#fff" stroke-opacity="0.16" stroke-width="1"/>
<line x1="240.9" x2="240.9" y1="355.5" y2="498.0" stroke="#fff" stroke-opacity="0.16" stroke-width="1"/>
<line x1="282.6" x2="282.6" y1="355.5" y2="498.0" stroke="#fff" stroke-opacity="0.16" stroke-width="1"/>
<line x1="324.4" x2="324.4" y1="355.5" y2="498.0" stroke="#fff" stroke-opacity="0.16" stroke-width="1"/>
<line x1="366.2" x2="366.2" y1="355.5" y2="498.0" stroke="#fff" stroke-opacity="0.16" stroke-width="1"/>
<line x1="408.0" x2="408.0" y1="355.5" y2="498.0" stroke="#fff" stroke-opacity="0.16" stroke-width="1"/>
<line x1="449.8" x2="449.8" y1="355.5" y2="498.0" stroke="#fff" stroke-opacity="0.16" stroke-width="1"/>
<line x1="491.6" x2="491.6" y1="355.5" y2="498.0" stroke="#fff" stroke-opacity="0.16" stroke-width="1"/>
<line x1="533.4" x2="533.4" y1="355.5" y2="498.0" stroke="#fff" stroke-opacity="0.16" stroke-width="1"/>
<line x1="575.2" x2="575.2" y1="355.5" y2="498.0" stroke="#fff" stroke-opacity="0.16" stroke-width="1"/>
<line x1="617.0" x2="617.0" y1="355.5" y2="498.0" stroke="#fff" stroke-opacity="0.16" stroke-width="1"/>
<line x1="658.8" x2="658.8" y1="355.5" y2="498.0" stroke="#fff" stroke-opacity="0.16" stroke-width="1"/>
<line x1="700.6" x2="700.6" y1="355.5" y2="498.0" stroke="#fff" stroke-opacity="0.16" stroke-width="1"/>
<line x1="742.3" x2="742.3" y1="355.5" y2="498.0" stroke="#fff" stroke-opacity="0.16" stroke-width="1"/>
<line x1="784.1" x2="784.1" y1="355.5" y2="498.0" stroke="#fff" stroke-opacity="0.16" stroke-width="1"/>
<line x1="825.9" x2="825.9" y1="355.5" y2="498.0" stroke="#fff" stroke-opacity="0.16" stroke-width="1"/>
<line x1="867.7" x2="867.7" y1="355.5" y2="498.0" stroke="#fff" stroke-opacity="0.16" stroke-width="1"/>
<line x1="909.5" x2="909.5" y1="355.5" y2="498.0" stroke="#fff" stroke-opacity="0.16" stroke-width="1"/>
<line x1="951.3" x2="951.3" y1="355.5" y2="498.0" stroke="#fff" stroke-opacity="0.16" stroke-width="1"/>
<line x1="993.1" x2="993.1" y1="355.5" y2="498.0" stroke="#fff" stroke-opacity="0.16" stroke-width="1"/>
<line x1="1034.9" x2="1034.9" y1="355.5" y2="498.0" stroke="#fff" stroke-opacity="0.16" stroke-width="1"/>
<line x1="1076.7" x2="1076.7" y1="355.5" y2="498.0" stroke="#fff" stroke-opacity="0.16" stroke-width="1"/>
<line x1="1118.5" x2="1118.5" y1="355.5" y2="498.0" stroke="#fff" stroke-opacity="0.16" stroke-width="1"/>
<line x1="1160.2" x2="1160.2" y1="355.5" y2="498.0" stroke="#fff" stroke-opacity="0.16" stroke-width="1"/>
<path d="M90.3,424.1C97.5,423.0 104.6,420.7 111.8,420.7C118.8,420.7 125.8,420.7 132.8,420.7C139.8,420.7 146.8,420.7 153.8,419.8C160.7,418.9 167.5,408.8 174.4,404.6C181.5,400.2 188.6,394.0 195.7,394.0C202.6,394.0 209.4,394.0 216.3,394.0C223.3,394.0 230.3,398.3 237.3,398.3C244.2,398.3 251.2,397.2 258.1,397.2C265.2,397.2 272.2,402.6 279.3,404.4C286.2,406.2 293.0,408.1 299.9,408.1C306.9,408.1 313.9,405.6 320.9,404.4C327.8,403.2 334.8,402.6 341.7,401.0C348.6,399.4 355.5,394.6 362.4,394.6C369.4,394.6 376.4,400.8 383.4,403.6C390.4,406.4 397.4,411.5 404.4,411.5C411.3,411.5 418.3,411.5 425.2,411.5C432.2,411.5 439.1,414.4 446.1,414.4C453.1,414.4 460.0,414.4 467.0,414.4C474.1,414.4 481.1,417.9 488.2,417.9C495.1,417.9 501.9,415.8 508.8,415.8C515.8,415.8 522.8,417.9 529.8,418.7C536.8,419.5 543.7,420.8 550.7,420.8C557.6,420.8 564.4,415.8 571.3,415.8C578.3,415.8 585.3,432.1 592.3,433.0C599.3,433.9 606.3,433.9 613.3,433.9C620.2,433.9 627.1,426.5 634.0,426.5C641.0,426.5 648.0,437.1 655.0,437.1C662.2,437.1 669.3,435.8 676.5,434.7C683.5,433.7 690.5,431.3 697.5,430.8C704.4,430.3 711.4,430.3 718.3,430.3C725.3,430.3 732.3,442.8 739.3,442.8C746.3,442.8 753.3,428.7 760.3,424.2C767.2,419.7 774.2,417.9 781.1,415.8C788.0,413.7 794.9,411.5 801.8,411.5C808.8,411.5 815.7,411.5 822.7,411.5C829.7,411.5 836.7,416.1 843.7,416.1C850.7,416.1 857.6,409.7 864.6,407.0C871.5,404.3 878.3,399.8 885.2,399.8C892.2,399.8 899.2,404.9 906.2,407.9C913.2,410.8 920.2,417.5 927.2,417.5C934.1,417.5 941.0,413.2 947.9,413.2C954.8,413.2 961.8,417.5 968.7,417.5C975.7,417.5 982.7,407.0 989.7,407.0C996.7,407.0 1003.6,417.5 1010.6,417.5C1017.6,417.5 1024.6,413.1 1031.6,408.9C1038.6,404.7 1045.5,392.5 1052.5,392.5C1059.5,392.5 1066.5,394.0 1073.5,394.0C1080.4,394.0 1087.2,381.0 1094.1,381.0C1101.1,381.0 1108.1,392.7 1115.1,397.4C1122.1,402.0 1129.0,408.9 1136.0,408.9C1142.9,408.9 1149.8,408.9 1156.7,408.9C1161.9,408.9 1167.0,406.6 1172.2,405.4" fill="none" stroke="#f0811c" stroke-width="1.4"/>
<circle cx="90.3" cy="424.1" r="2.6" fill="#f0811c"/>
<circle cx="111.8" cy="420.7" r="2.6" fill="#f0811c"/>
<circle cx="132.8" cy="420.7" r="2.6" fill="#f0811c"/>
<circle cx="153.8" cy="419.8" r="2.6" fill="#f0811c"/>
<circle cx="174.4" cy="404.6" r="2.6" fill="#f0811c"/>
<circle cx="195.7" cy="394.0" r="2.6" fill="#f0811c"/>
<circle cx="216.3" cy="394.0" r="2.6" fill="#f0811c"/>
<circle cx="237.3" cy="398.3" r="2.6" fill="#f0811c"/>
<circle cx="258.1" cy="397.2" r="2.6" fill="#f0811c"/>
<circle cx="279.3" cy="404.4" r="2.6" fill="#f0811c"/>
<circle cx="299.9" cy="408.1" r="2.6" fill="#f0811c"/>
<circle cx="320.9" cy="404.4" r="2.6" fill="#f0811c"/>
<circle cx="341.7" cy="401.0" r="2.6" fill="#f0811c"/>
<circle cx="362.4" cy="394.6" r="2.6" fill="#f0811c"/>
<circle cx="383.4" cy="403.6" r="2.6" fill="#f0811c"/>
<circle cx="404.4" cy="411.5" r="2.6" fill="#f0811c"/>
<circle cx="425.2" cy="411.5" r="2.6" fill="#f0811c"/>
<circle cx="446.1" cy="414.4" r="2.6" fill="#f0811c"/>
<circle cx="467.0" cy="414.4" r="2.6" fill="#f0811c"/>
<circle cx="488.2" cy="417.9" r="2.6" fill="#f0811c"/>
<circle cx="508.8" cy="415.8" r="2.6" fill="#f0811c"/>
<circle cx="529.8" cy="418.7" r="2.6" fill="#f0811c"/>
<circle cx="550.7" cy="420.8" r="2.6" fill="#f0811c"/>
<circle cx="571.3" cy="415.8" r="2.6" fill="#f0811c"/>
<circle cx="592.3" cy="433.0" r="2.6" fill="#f0811c"/>
<circle cx="613.3" cy="433.9" r="2.6" fill="#f0811c"/>
<circle cx="634.0" cy="426.5" r="2.6" fill="#f0811c"/>
<circle cx="655.0" cy="437.1" r="2.6" fill="#f0811c"/>
<circle cx="676.5" cy="434.7" r="2.6" fill="#f0811c"/>
<circle cx="697.5" cy="430.8" r="2.6" fill="#f0811c"/>
<circle cx="718.3" cy="430.3" r="2.6" fill="#f0811c"/>
<circle cx="739.3" cy="442.8" r="2.6" fill="#f0811c"/>
<circle cx="760.3" cy="424.2" r="2.6" fill="#f0811c"/>
<circle cx="781.1" cy="415.8" r="2.6" fill="#f0811c"/>
<circle cx="801.8" cy="411.5" r="2.6" fill="#f0811c"/>
<circle cx="822.7" cy="411.5" r="2.6" fill="#f0811c"/>
<circle cx="843.7" cy="416.1" r="2.6" fill="#f0811c"/>
<circle cx="864.6" cy="407.0" r="2.6" fill="#f0811c"/>
<circle cx="885.2" cy="399.8" r="2.6" fill="#f0811c"/>
<circle cx="906.2" cy="407.9" r="2.6" fill="#f0811c"/>
<circle cx="927.2" cy="417.5" r="2.6" fill="#f0811c"/>
<circle cx="947.9" cy="413.2" r="2.6" fill="#f0811c"/>
<circle cx="968.7" cy="417.5" r="2.6" fill="#f0811c"/>
<circle cx="989.7" cy="407.0" r="2.6" fill="#f0811c"/>
<circle cx="1010.6" cy="417.5" r="2.6" fill="#f0811c"/>
<circle cx="1031.6" cy="408.9" r="2.6" fill="#f0811c"/>
<circle cx="1052.5" cy="392.5" r="2.6" fill="#f0811c"/>
<circle cx="1073.5" cy="394.0" r="2.6" fill="#f0811c"/>
<circle cx="1094.1" cy="381.0" r="2.6" fill="#f0811c"/>
<circle cx="1115.1" cy="397.4" r="2.6" fill="#f0811c"/>
<circle cx="1136.0" cy="408.9" r="2.6" fill="#f0811c"/>
<circle cx="1156.7" cy="408.9" r="2.6" fill="#f0811c"/>
<circle cx="1172.2" cy="405.4" r="2.6" fill="#f0811c"/>
<text x="63.5" y="501.0" text-anchor="end" class="yl">0</text>
<text x="63.5" y="460.3" text-anchor="end" class="yl">1000</text>
<text x="63.5" y="419.6" text-anchor="end" class="yl">2000</text>
<text x="63.5" y="378.9" text-anchor="end" class="yl">3000</text>
<text x="1194" y="358.1" class="yl">20</text>
<text x="1194" y="429.4" class="yl">28</text>
<text x="1194" y="500.6" class="yl">36</text>
<text x="72.9" y="517" text-anchor="middle" class="xl">Jan 09</text>
<text x="114.7" y="517" text-anchor="middle" class="xl">Jan 23</text>
<text x="156.5" y="517" text-anchor="middle" class="xl">Feb 06</text>
<text x="198.3" y="517" text-anchor="middle" class="xl">Feb 20</text>
<text x="240.1" y="517" text-anchor="middle" class="xl">Mar 06</text>
<text x="281.8" y="517" text-anchor="middle" class="xl">Mar 20</text>
<text x="323.6" y="517" text-anchor="middle" class="xl">Apr 03</text>
<text x="365.4" y="517" text-anchor="middle" class="xl">Apr 17</text>
<text x="408.0" y="517" text-anchor="middle" class="xl">May</text>
<text x="408.0" y="530.6" text-anchor="middle" class="xl">01</text>
<text x="449.8" y="517" text-anchor="middle" class="xl">May</text>
<text x="449.8" y="530.6" text-anchor="middle" class="xl">15</text>
<text x="491.6" y="517" text-anchor="middle" class="xl">May</text>
<text x="491.6" y="530.6" text-anchor="middle" class="xl">29</text>
<text x="532.6" y="517" text-anchor="middle" class="xl">Jun 12</text>
<text x="574.4" y="517" text-anchor="middle" class="xl">Jun 26</text>
<text x="616.2" y="517" text-anchor="middle" class="xl">Jul 10</text>
<text x="658.0" y="517" text-anchor="middle" class="xl">Jul 24</text>
<text x="699.8" y="517" text-anchor="middle" class="xl">Aug 07</text>
<text x="741.5" y="517" text-anchor="middle" class="xl">Aug 21</text>
<text x="783.3" y="517" text-anchor="middle" class="xl">Sep 04</text>
<text x="825.1" y="517" text-anchor="middle" class="xl">Sep 18</text>
<text x="866.9" y="517" text-anchor="middle" class="xl">Oct 02</text>
<text x="908.7" y="517" text-anchor="middle" class="xl">Oct 16</text>
<text x="950.5" y="517" text-anchor="middle" class="xl">Oct 30</text>
<text x="992.3" y="517" text-anchor="middle" class="xl">Nov 13</text>
<text x="1034.1" y="517" text-anchor="middle" class="xl">Nov 27</text>
<text x="1075.9" y="517" text-anchor="middle" class="xl">Dec 11</text>
<text x="1117.7" y="517" text-anchor="middle" class="xl">Dec 25</text>
<text x="1159.4" y="517" text-anchor="middle" class="xl">Jan 08</text>
</svg>
<div class="st" style="left:22.400px;width:401.600px;border-color:#f0801a;color:#f0801a"><svg style="left:20.500px;top:22.800px" width="31" height="23" viewBox="0 0 31 23"><g fill="none" stroke="#f0801a" stroke-width="2.100"><circle cx="7.500" cy="16.200" r="4.900"/><circle cx="23.300" cy="16.200" r="4.900"/><path d="M11.800 13.700h7.200M2.700 16.400V5.600C2.700 3 4.200 1.700 7.700 1.700M28.200 16.400V5.600c0-2.600-1.500-3.900-5-3.900"/></g></svg><div class="ttl">Average<br>Keyword Position</div><svg style="left:62px;top:68px" width="12" height="13" viewBox="0 0 12 13"><path d="M6 0.500l5.500 6H8v5.500H4V6.500H0.500z" fill="#f0801a"/></svg><div class="big" style="left:83.100px">7.6%</div><div class="sm" style="left:165px">25.6 current</div><svg style="left:2.500px;top:90px" width="26" height="22" viewBox="0 0 26 22"><g fill="#f0801a"><rect x="0.55" y="17.75" width="1.750" height="1.750" rx="0.300"/><rect x="0.55" y="14.57" width="1.750" height="1.750" rx="0.300"/><rect x="0.55" y="11.39" width="1.750" height="1.750" rx="0.300"/><rect x="3.63" y="17.75" width="1.750" height="1.750" rx="0.300"/><rect x="3.63" y="14.57" width="1.750" height="1.750" rx="0.300"/><rect x="3.63" y="11.39" width="1.750" height="1.750" rx="0.300"/><rect x="3.63" y="8.21" width="1.750" height="1.750" rx="0.300"/><rect x="3.63" y="5.03" width="1.750" height="1.750" rx="0.300"/><rect x="6.71" y="17.75" width="1.750" height="1.750" rx="0.300"/><rect x="6.71" y="14.57" width="1.750" height="1.750" rx="0.300"/><rect x="6.71" y="11.39" width="1.750" height="1.750" rx="0.300"/><rect x="6.71" y="8.21" width="1.750" height="1.750" rx="0.300"/><rect x="9.79" y="17.75" width="1.750" height="1.750" rx="0.300"/><rect x="9.79" y="14.57" width="1.750" height="1.750" rx="0.300"/><rect x="9.79" y="11.39" width="1.750" height="1.750" rx="0.300"/><rect x="9.79" y="8.21" width="1.750" height="1.750" rx="0.300"/><rect x="9.79" y="5.03" width="1.750" height="1.750" rx="0.300"/><rect x="9.79" y="1.85" width="1.750" height="1.750" rx="0.300"/><rect x="12.87" y="17.75" width="1.750" height="1.750" rx="0.300"/><rect x="12.87" y="14.57" width="1.750" height="1.750" rx="0.300"/><rect x="12.87" y="11.39" width="1.750" height="1.750" rx="0.300"/><rect x="12.87" y="8.21" width="1.750" height="1.750" rx="0.300"/><rect x="15.95" y="17.75" width="1.750" height="1.750" rx="0.300"/><rect x="15.95" y="14.57" width="1.750" height="1.750" rx="0.300"/><rect x="15.95" y="11.39" width="1.750" height="1.750" rx="0.300"/><rect x="19.03" y="17.75" width="1.750" height="1.750" rx="0.300"/><rect x="22.100" y="17.900" width="1.200" height="1.200" opacity="0.500"/></g></svg></div><div class="st" style="left:424px;width:402px;border-color:#c987d2;color:#c987d2"><svg style="left:19px;top:22.500px" width="26" height="25" viewBox="0 0 26 25"><g fill="none" stroke="#c987d2" stroke-width="1.900"><circle cx="12.550" cy="3.800" r="2.100"/><path d="M12.550 6v17.500M8.200 7.600h8.800M3.700 15.200C5 20.300 8.300 22.900 12.550 22.900s7.550-2.600 8.850-7.700"/><path d="M0.900 17.600l2.500-4 3.600 2.900M24.300 17.600l-2.500-4-3.600 2.900" stroke-linejoin="miter"/></g></svg><div class="ttl">New<br>Backlinks</div><div class="big" style="left:61.500px">857</div><div class="sm" style="left:125px">(532 no SEO value)</div><svg style="left:2.500px;top:90px" width="26" height="22" viewBox="0 0 26 22"><g fill="#c987d2"><rect x="0.55" y="17.75" width="1.750" height="1.750" rx="0.300"/><rect x="0.55" y="14.57" width="1.750" height="1.750" rx="0.300"/><rect x="0.55" y="11.39" width="1.750" height="1.750" rx="0.300"/><rect x="3.63" y="17.75" width="1.750" height="1.750" rx="0.300"/><rect x="3.63" y="14.57" width="1.750" height="1.750" rx="0.300"/><rect x="3.63" y="11.39" width="1.750" height="1.750" rx="0.300"/><rect x="3.63" y="8.21" width="1.750" height="1.750" rx="0.300"/><rect x="3.63" y="5.03" width="1.750" height="1.750" rx="0.300"/><rect x="6.71" y="17.75" width="1.750" height="1.750" rx="0.300"/><rect x="6.71" y="14.57" width="1.750" height="1.750" rx="0.300"/><rect x="6.71" y="11.39" width="1.750" height="1.750" rx="0.300"/><rect x="6.71" y="8.21" width="1.750" height="1.750" rx="0.300"/><rect x="9.79" y="17.75" width="1.750" height="1.750" rx="0.300"/><rect x="9.79" y="14.57" width="1.750" height="1.750" rx="0.300"/><rect x="9.79" y="11.39" width="1.750" height="1.750" rx="0.300"/><rect x="9.79" y="8.21" width="1.750" height="1.750" rx="0.300"/><rect x="9.79" y="5.03" width="1.750" height="1.750" rx="0.300"/><rect x="9.79" y="1.85" width="1.750" height="1.750" rx="0.300"/><rect x="12.87" y="17.75" width="1.750" height="1.750" rx="0.300"/><rect x="12.87" y="14.57" width="1.750" height="1.750" rx="0.300"/><rect x="12.87" y="11.39" width="1.750" height="1.750" rx="0.300"/><rect x="12.87" y="8.21" width="1.750" height="1.750" rx="0.300"/><rect x="15.95" y="17.75" width="1.750" height="1.750" rx="0.300"/><rect x="15.95" y="14.57" width="1.750" height="1.750" rx="0.300"/><rect x="15.95" y="11.39" width="1.750" height="1.750" rx="0.300"/><rect x="19.03" y="17.75" width="1.750" height="1.750" rx="0.300"/><rect x="22.100" y="17.900" width="1.200" height="1.200" opacity="0.500"/></g></svg></div><div class="st" style="left:826px;width:400.800px;border-color:#58aae6;color:#58aae6"><svg style="left:17.500px;top:22.500px" width="28" height="26" viewBox="0 0 28 26"><g fill="none" stroke="#58aae6" stroke-width="1.900" stroke-linecap="round"><path d="M7.800 23.450A11.800 11.800 0 1 1 19.600 23.450"/><path d="M13 13.800l6.600-3.700" stroke-width="2.100"/><circle cx="13" cy="13.800" r="0.900" fill="#58aae6" stroke-width="1"/><path d="M4.00 18.85L5.99 17.70M2.50 13.25L4.80 13.25M4.00 7.65L5.99 8.80M8.10 3.55L9.25 5.54M13.70 2.05L13.70 4.35M19.30 3.55L18.15 5.54M23.40 7.65L21.41 8.80M24.90 13.25L22.60 13.25M23.40 18.85L21.41 17.70" stroke-width="1.400" stroke-linecap="butt"/></g></svg><div class="ttl">Organic Traffic<br>from SE</div><svg style="left:60.800px;top:68.300px" width="12" height="13" viewBox="0 0 12 13"><path d="M6 0.500l5.500 6H8v5.500H4V6.500H0.500z" fill="#58aae6"/></svg><div class="big" style="left:82.400px">93.6%</div><div class="sm" style="left:183px">401255 visits</div><svg style="left:2.500px;top:90px" width="26" height="22" viewBox="0 0 26 22"><g fill="#58aae6"><rect x="0.55" y="17.75" width="1.750" height="1.750" rx="0.300"/><rect x="0.55" y="14.57" width="1.750" height="1.750" rx="0.300"/><rect x="0.55" y="11.39" width="1.750" height="1.750" rx="0.300"/><rect x="3.63" y="17.75" width="1.750" height="1.750" rx="0.300"/><rect x="3.63" y="14.57" width="1.750" height="1.750" rx="0.300"/><rect x="3.63" y="11.39" width="1.750" height="1.750" rx="0.300"/><rect x="3.63" y="8.21" width="1.750" height="1.750" rx="0.300"/><rect x="3.63" y="5.03" width="1.750" height="1.750" rx="0.300"/><rect x="6.71" y="17.75" width="1.750" height="1.750" rx="0.300"/><rect x="6.71" y="14.57" width="1.750" height="1.750" rx="0.300"/><rect x="6.71" y="11.39" width="1.750" height="1.750" rx="0.300"/><rect x="6.71" y="8.21" width="1.750" height="1.750" rx="0.300"/><rect x="9.79" y="17.75" width="1.750" height="1.750" rx="0.300"/><rect x="9.79" y="14.57" width="1.750" height="1.750" rx="0.300"/><rect x="9.79" y="11.39" width="1.750" height="1.750" rx="0.300"/><rect x="9.79" y="8.21" width="1.750" height="1.750" rx="0.300"/><rect x="9.79" y="5.03" width="1.750" height="1.750" rx="0.300"/><rect x="9.79" y="1.85" width="1.750" height="1.750" rx="0.300"/><rect x="12.87" y="17.75" width="1.750" height="1.750" rx="0.300"/><rect x="12.87" y="14.57" width="1.750" height="1.750" rx="0.300"/><rect x="12.87" y="11.39" width="1.750" height="1.750" rx="0.300"/><rect x="12.87" y="8.21" width="1.750" height="1.750" rx="0.300"/><rect x="15.95" y="17.75" width="1.750" height="1.750" rx="0.300"/><rect x="15.95" y="14.57" width="1.750" height="1.750" rx="0.300"/><rect x="15.95" y="11.39" width="1.750" height="1.750" rx="0.300"/><rect x="19.03" y="17.75" width="1.750" height="1.750" rx="0.300"/><rect x="22.100" y="17.900" width="1.200" height="1.200" opacity="0.500"/></g></svg></div>
<div class="abs" style="left:423.5px;top:560px;width:1px;height:112px;background:#f7f7f7"></div><div class="abs" style="left:825.5px;top:560px;width:1px;height:112px;background:#f7f7f7"></div>
</body></html>
